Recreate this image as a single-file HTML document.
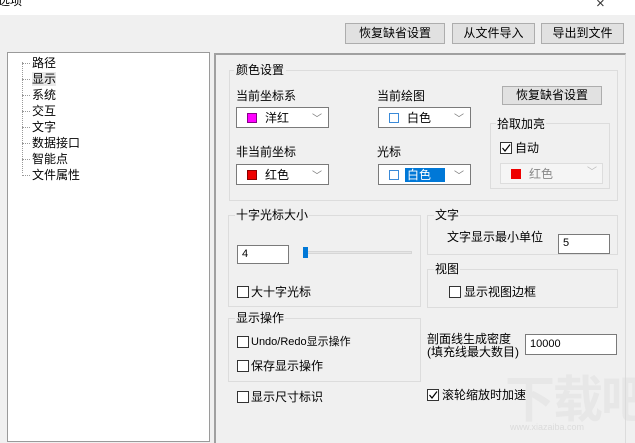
<!DOCTYPE html>
<html><head><meta charset="utf-8"><style>
*{box-sizing:border-box;margin:0;padding:0}
body{width:635px;height:430px;overflow:hidden;background:#f0f0f0;position:relative;font-family:"Liberation Sans","Noto Sans CJK SC",sans-serif;font-size:12px;color:#000}
.a{position:absolute;white-space:nowrap;line-height:14px}
.btn{position:absolute;background:#e1e1e1;border:1px solid #adadad;text-align:center;line-height:18px;font-size:12px}
.grp{position:absolute;border:1px solid #dcdcdc}
.combo{position:absolute;background:#fff;border:1px solid #7a7a7a;height:21px}
.combo .sw{position:absolute;left:10px;top:5px;width:10px;height:10px}
.combo .t{position:absolute;left:28px;top:3px;line-height:14px}
.combo .ar{position:absolute;right:6px;top:2px;color:#777;font-size:10px}
.inp{position:absolute;background:#fff;border:1px solid #7a7a7a;padding-left:4px;line-height:17px;font-size:11px}
.cb{position:absolute;width:12px;height:12px;border:1px solid #333;background:#fff}
.tr div{position:relative;height:16px}
.tr div:before{content:"";position:absolute;left:-10px;top:8px;width:8px;border-top:1px dotted #999}
</style></head><body>
<div style="position:absolute;left:0;top:0;width:635px;height:15px;background:#fff"></div>
<div class="a" style="left:-2px;top:-6px;font-size:12px">选项</div>
<div class="a" style="left:596px;top:-3px;font-size:15px;color:#333">×</div>

<div class="btn" style="left:345px;top:23px;width:100px;height:21px">恢复缺省设置</div>
<div class="btn" style="left:452px;top:23px;width:83px;height:21px">从文件导入</div>
<div class="btn" style="left:541px;top:23px;width:83px;height:21px">导出到文件</div>

<div style="position:absolute;left:7px;top:52px;width:203px;height:390px;background:#fff;border:1px solid #9a9a9a"></div>
<div style="position:absolute;left:22px;top:62px;height:111px;border-left:1px dotted #999"></div>
<div class="a tr" style="left:32px;top:55px;line-height:16px">
<div>路径</div><div><span style="background:#e8e8e8">显示</span></div><div>系统</div><div>交互</div><div>文字</div><div>数据接口</div><div>智能点</div><div>文件属性</div></div>

<div style="position:absolute;left:214px;top:53px;width:412px;height:390px;border-left:2px solid #a0a0a0;border-top:2px solid #a0a0a0;border-right:1px solid #dcdcdc"></div>

<div class="grp" style="left:229px;top:70px;width:389px;height:131px"></div>
<div class="a" style="left:234px;top:63px;background:#f0f0f0;padding:0 2px">颜色设置</div>
<div class="a" style="left:236px;top:89px">当前坐标系</div>
<div class="combo" style="left:236px;top:107px;width:93px"><div class="sw" style="background:#f0f;border:1px solid #808"></div><div class="t">洋红</div><div class="ar">﹀</div></div>
<div class="a" style="left:377px;top:89px">当前绘图</div>
<div class="combo" style="left:378px;top:107px;width:93px"><div class="sw" style="border:1px solid #3a8ad8"></div><div class="t">白色</div><div class="ar">﹀</div></div>
<div class="btn" style="left:502px;top:86px;width:100px;height:19px;line-height:16px">恢复缺省设置</div>
<div class="a" style="left:236px;top:145px">非当前坐标</div>
<div class="combo" style="left:236px;top:164px;width:93px"><div class="sw" style="background:#e00;border:1px solid #800"></div><div class="t">红色</div><div class="ar">﹀</div></div>
<div class="a" style="left:377px;top:145px">光标</div>
<div class="combo" style="left:378px;top:164px;width:93px"><div class="sw" style="border:1px solid #3a8ad8"></div><div class="t" style="left:26px;background:#0078d7;color:#fff;width:40px;padding-left:2px">白色</div><div class="ar">﹀</div></div>
<div class="grp" style="left:490px;top:123px;width:120px;height:66px"></div>
<div class="a" style="left:496px;top:117px;background:#f0f0f0;padding:0 1px">拾取加亮</div>
<div class="cb" style="left:500px;top:142px"><svg width="10" height="10" style="position:absolute;left:0;top:0"><path d="M1.5 5 L4 8 L9 1.5" fill="none" stroke="#000" stroke-width="1.2"/></svg></div>
<div class="a" style="left:515px;top:141px">自动</div>
<div style="position:absolute;left:500px;top:163px;width:103px;height:21px;border:1px solid #ddd;background:#f5f5f5"><div style="position:absolute;left:10px;top:5px;width:10px;height:10px;background:#e00"></div><div class="a" style="left:28px;top:3px;color:#888">红色</div><div class="a" style="right:5px;top:2px;color:#bbb;font-size:10px">﹀</div></div>

<div class="grp" style="left:228px;top:215px;width:193px;height:92px"></div>
<div class="a" style="left:235px;top:208px;background:#f0f0f0;padding:0 1px">十字光标大小</div>
<div class="inp" style="left:237px;top:245px;width:52px;height:19px">4</div>
<div style="position:absolute;left:303px;top:251px;width:109px;height:3px;background:#e6e6e6;border:1px solid #d6d6d6"></div>
<div style="position:absolute;left:303px;top:247px;width:5px;height:11px;background:#0078d7"></div>
<div class="cb" style="left:237px;top:286px"></div><div class="a" style="left:251px;top:285px">大十字光标</div>

<div class="grp" style="left:427px;top:215px;width:191px;height:40px"></div>
<div class="a" style="left:434px;top:208px;background:#f0f0f0;padding:0 1px">文字</div>
<div class="a" style="left:447px;top:230px">文字显示最小单位</div>
<div class="inp" style="left:558px;top:234px;width:52px;height:20px">5</div>

<div class="grp" style="left:427px;top:269px;width:191px;height:39px"></div>
<div class="a" style="left:434px;top:262px;background:#f0f0f0;padding:0 1px">视图</div>
<div class="cb" style="left:449px;top:286px"></div><div class="a" style="left:464px;top:285px">显示视图边框</div>

<div class="grp" style="left:228px;top:318px;width:193px;height:64px"></div>
<div class="a" style="left:235px;top:311px;background:#f0f0f0;padding:0 1px">显示操作</div>
<div class="cb" style="left:237px;top:336px"></div><div class="a" style="left:251px;top:335px;font-size:11px">Undo/Redo显示操作</div>
<div class="cb" style="left:237px;top:360px"></div><div class="a" style="left:251px;top:359px">保存显示操作</div>

<div class="a" style="left:427px;top:333px;line-height:13px">剖面线生成密度<br>(填充线最大数目)</div>
<div class="inp" style="left:525px;top:334px;width:92px;height:21px;line-height:19px">10000</div>

<div class="cb" style="left:237px;top:391px"></div><div class="a" style="left:251px;top:390px">显示尺寸标识</div>
<div class="cb" style="left:427px;top:389px"><svg width="10" height="10" style="position:absolute;left:0;top:0"><path d="M1.5 5 L4 8 L9 1.5" fill="none" stroke="#000" stroke-width="1.2"/></svg></div>
<div class="a" style="left:442px;top:388px">滚轮缩放时加速</div>

<div class="a" style="left:505px;top:372px;font-size:50px;line-height:56px;color:rgba(215,215,215,0.35);font-weight:bold;letter-spacing:-2px">下载吧</div>
<div class="a" style="left:510px;top:420px;font-size:9px;color:rgba(200,200,200,0.5)">www.xiazaiba.com</div>
</body></html>
